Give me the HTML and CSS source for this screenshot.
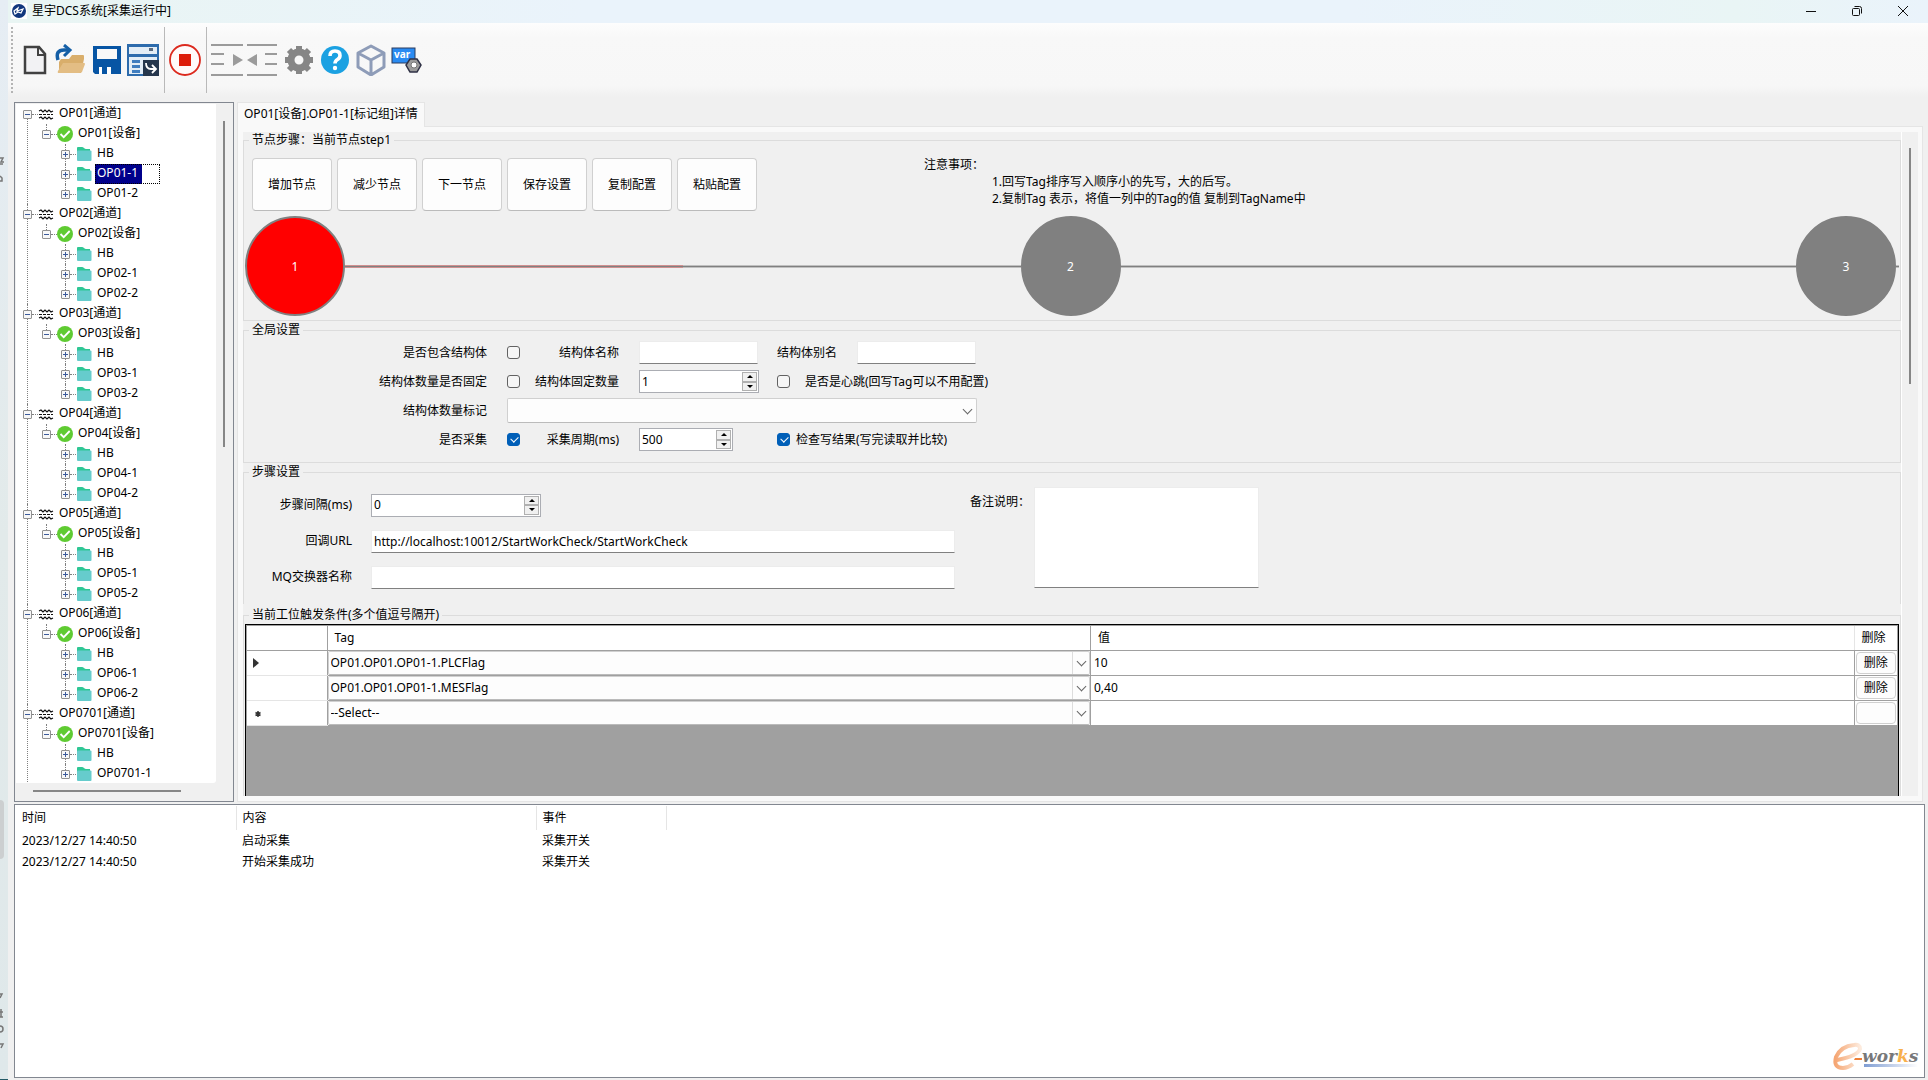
FILE: index.html
```html
<!DOCTYPE html>
<html lang="zh-CN">
  <head>
    <meta charset="UTF-8">
    <title>星宇DCS系统</title>
    <link rel="stylesheet" href="styles.css">
  </head>
  <body>
    <!-- shared icons -->
    <svg class="sprite" aria-hidden="true">
      <symbol id="icon-channel" viewBox="0 0 16 16">
        <path d="M1 5l2-1 2 2 2-2 2 2 2-2 2 2 2-1M1 12l2-1 2 2 2-2 2 2 2-2 2 2 2-1" fill="none" stroke="#111" stroke-width="1.2"/>
        <path d="M1 8.5h14" stroke="#111" stroke-dasharray="3 1"/>
      </symbol>
      <symbol id="icon-device" viewBox="0 0 16 16">
        <circle cx="8" cy="8" r="8" fill="#5fcb32"/>
        <path d="M3.5 8l3.2 3.2L12.700 5" fill="none" stroke="#fff" stroke-width="1.8"/>
      </symbol>
      <symbol id="icon-group" viewBox="0 0 16 16">
        <path d="M1 2q0-1 1-1h4q1 0 2 1t2 1h4v4H1z" fill="#2fc795"/>
        <path d="M1 5.5q0-1 1-1h12.500q1 0 1 1v8.500q0 1-1 1H2q-1 0-1-1z" fill="#66cccc"/>
      </symbol>
    </svg>

    <div class="desktop">
      <div class="backdrop">
        <svg class="scrap" viewBox="0 0 5 26"><path d="M0 2h3l-2 4h3M0 8h3M0 20l2 2v3H0" fill="none" stroke="#777" stroke-width="1.5"/></svg>
        <div class="thumb"></div>
        <svg class="scrap scrap-low" viewBox="0 0 5 60"><path d="M0 4h2l-2 4M0 22h3M1 19v8M0 27h3M0 36q3 0 3 3t-3 3M0 54h3l-2 4" fill="none" stroke="#777" stroke-width="1.5"/></svg>
      </div>

      <div class="window">
        <header class="titlebar">
          <svg class="logo" viewBox="0 0 16 16">
            <rect width="16" height="16" fill="#fff"/>
            <circle cx="8" cy="8" r="7" fill="#12377d"/>
            <path d="M3 8l4-3-1 3 6-2-2 4-3-1-3 2z" fill="none" stroke="#fff" stroke-width="1.2"/>
          </svg>
          <h1>星宇DCS系统[采集运行中]</h1>
          <div class="controls">
            <button aria-label="最小化"><svg viewBox="0 0 12 12"><path d="M1 6.5h10"/></svg></button>
            <button aria-label="还原"><svg viewBox="0 0 12 12"><rect x="1.5" y="3.5" width="7" height="7" rx="1"/><path d="M3.5 1.5h5q2 0 2 2v5"/></svg></button>
            <button aria-label="关闭"><svg viewBox="0 0 12 12"><path d="M1 1l10 10M11 1L1 11"/></svg></button>
          </div>
        </header>

        <nav class="toolbar">
          <button aria-label="新建">
            <svg viewBox="0 0 32 32"><path d="M6 3h14l6 7v19H6z" fill="#f2f2f4" stroke="#414141" stroke-width="2.5"/><path d="M19 3v8h7" fill="none" stroke="#414141" stroke-width="2"/></svg>
          </button>
          <button aria-label="打开">
            <svg viewBox="0 0 32 32"><path d="M4 18v9q0 2 2 2h20l3-14v-3q0-1-1-1H17l-3 4H6z" fill="#d9ae6b"/><path d="M8 19h21q1 0 1 1l-3 8q-1 1-3 1H4q-2 0-1-2z" fill="#e3bd84"/><path d="M3 16q-3-10 6-10h4" fill="none" stroke="#155fa6" stroke-width="3.5"/><path d="M9 1l6 5-6 6" fill="none" stroke="#155fa6" stroke-width="3"/></svg>
          </button>
          <button aria-label="保存">
            <svg viewBox="0 0 32 32"><path d="M2 2h28v28H4l-2-2z" fill="#0755a4"/><path d="M6 5h20v10H6z" fill="#f8f8f8"/><path d="M8 20h17v10H8z" fill="#fff"/><path d="M8 20h17v10h-5v-7h-4v7h-5v-7H8z" fill="#0755a4"/></svg>
          </button>
          <button aria-label="窗口">
            <svg viewBox="0 0 32 32"><path d="M0 0h32v32H0z" fill="#2d6bac"/><path d="M2 3h28v7H2zM2 13h28v17H2z" fill="#e3edf6"/><path d="M22 4h4v3h-4z" fill="#5b6b80"/><path d="M5 16h8v3H5zM5 21h8v3H5zM5 26h8v3H5z" fill="#3f7dbf"/><path d="M16 16h16v16H16z" fill="#25364c"/><path d="M19 19q0 6 5 6h4M25 21l4 4-4 4" fill="none" stroke="#fff" stroke-width="1.8"/></svg>
          </button>
          <span class="divider"></span>
          <button aria-label="停止采集">
            <svg viewBox="0 0 32 32"><circle cx="16" cy="16" r="15" fill="#fffafa" stroke="#dc2a1e" stroke-width="1.8"/><path d="M10 10h12v12H10z" fill="#dd1d0b"/></svg>
          </button>
          <span class="divider"></span>
          <button aria-label="增加缩进">
            <svg viewBox="0 0 32 32"><path d="M0 1h32M0 10h13M0 20h13M0 31h32" stroke="#9b9b9b" stroke-width="2"/><path d="M22 10v12l10-6z" fill="#9b9b9b"/></svg>
          </button>
          <button aria-label="减少缩进">
            <svg viewBox="0 0 32 32"><path d="M0 1h30M18 10h12M18 20h12M0 31h30" stroke="#9b9b9b" stroke-width="2"/><path d="M10 10v12L0 16z" fill="#9b9b9b"/></svg>
          </button>
          <button aria-label="设置">
            <svg viewBox="0 0 32 32"><circle cx="16" cy="16" r="8" fill="none" stroke="#868686" stroke-width="7"/><path d="M16 2v6M16 24v6M2 16h6M24 16h6M6 6l4 4M22 22l4 4M26 6l-4 4M10 22l-4 4" stroke="#868686" stroke-width="6"/></svg>
          </button>
          <button aria-label="帮助">
            <svg viewBox="0 0 32 32"><circle cx="16" cy="16" r="14" fill="#1ba1e2"/><path d="M11 12q0-5 5-5t5 4.500q0 2.500-2.500 4t-2.500 4" fill="none" stroke="#fff" stroke-width="3.6"/><circle cx="16" cy="24" r="2.2" fill="#fff"/></svg>
          </button>
          <button aria-label="模型">
            <svg viewBox="0 0 32 32"><path d="M16 2l13 7v14l-13 8-13-8V9zM3 9l13 7 13-7M16 16v15" fill="none" stroke="#8e9cb8" stroke-width="3" stroke-linejoin="round"/></svg>
          </button>
          <button aria-label="变量">
            <svg viewBox="0 0 32 32"><rect x="1" y="4" width="23" height="15" fill="#2a8bf2" stroke="#2b3a5c"/><text x="3" y="14" class="var-text">var</text><path d="M19 15h7l4 6-4 7h-7l-4-7z" fill="#9b9b9b" stroke="#2f3145" stroke-width="1.5"/><circle cx="23" cy="21" r="3" fill="#fff" stroke="#777"/></svg>
          </button>
        </nav>

        <main class="workspace">
          <aside class="tree-pane">
            <div class="tree-view">
              <ul class="tree" id="tree"></ul>
            </div>
            <div class="tree-vscroll"></div>
            <div class="tree-hscroll"></div>
          </aside>

          <section class="detail">
            <div class="tab">OP01[设备].OP01-1[标记组]详情</div>
            <div class="panel">
              <div class="panel-body">
                <fieldset class="group steps-group">
                  <legend>节点步骤：当前节点step1</legend>
                  <div class="actions">
                    <button class="action">增加节点</button>
                    <button class="action">减少节点</button>
                    <button class="action">下一节点</button>
                    <button class="action">保存设置</button>
                    <button class="action">复制配置</button>
                    <button class="action">粘贴配置</button>
                    <div class="notes">
                      <p>注意事项：</p>
                      <ol>
                        <li>1.回写Tag排序写入顺序小的先写，大的后写。</li>
                        <li>2.复制Tag 表示，将值一列中的Tag的值 复制到TagName中</li>
                      </ol>
                    </div>
                  </div>
                  <div class="steps">
                    <span class="step active">1</span>
                    <span class="rail half"></span>
                    <span class="step">2</span>
                    <span class="rail"></span>
                    <span class="step">3</span>
                    <span class="rail end"></span>
                  </div>
                </fieldset>

                <fieldset class="group global-group">
                  <legend>全局设置</legend>
                  <div class="global-form">
                    <label for="hasStruct">是否包含结构体</label>
                    <input type="checkbox" id="hasStruct">
                    <label for="structName">结构体名称</label>
                    <input type="text" class="short" id="structName">
                    <div class="cell">
                      <label for="structAlias">结构体别名</label>
                      <input type="text" class="short" id="structAlias">
                    </div>

                    <label for="fixedCount">结构体数量是否固定</label>
                    <input type="checkbox" id="fixedCount">
                    <label for="structCount">结构体固定数量</label>
                    <div class="spinner spinner-m">
                      <input type="text" id="structCount" value="1">
                      <span class="spin"><button aria-label="加"></button><button aria-label="减"></button></span>
                    </div>
                    <div class="cell heartbeat">
                      <input type="checkbox" id="heartbeat">
                      <label for="heartbeat">是否是心跳(回写Tag可以不用配置)</label>
                    </div>

                    <label for="countTag">结构体数量标记</label>
                    <div class="combo wide"><select id="countTag"><option></option></select></div>

                    <label for="collect">是否采集</label>
                    <input type="checkbox" id="collect" checked>
                    <label for="period">采集周期(ms)</label>
                    <div class="spinner spinner-s">
                      <input type="text" id="period" value="500">
                      <span class="spin"><button aria-label="加"></button><button aria-label="减"></button></span>
                    </div>
                    <div class="cell verify">
                      <input type="checkbox" id="verify" checked>
                      <label for="verify">检查写结果(写完读取并比较)</label>
                    </div>
                  </div>
                </fieldset>

                <fieldset class="group step-group">
                  <legend>步骤设置</legend>
                  <div class="step-settings">
                    <div class="step-form">
                      <label for="interval">步骤间隔(ms)</label>
                      <div class="spinner spinner-l">
                        <input type="text" id="interval" value="0">
                        <span class="spin"><button aria-label="加"></button><button aria-label="减"></button></span>
                      </div>
                      <label for="callback">回调URL</label>
                      <input type="text" id="callback" value="http://localhost:10012/StartWorkCheck/StartWorkCheck">
                      <label for="exchange">MQ交换器名称</label>
                      <input type="text" id="exchange">
                    </div>
                    <label class="remark-label" for="remark">备注说明：</label>
                    <textarea id="remark"></textarea>
                  </div>
                </fieldset>

                <fieldset class="group trigger-group">
                  <legend>当前工位触发条件(多个值逗号隔开)</legend>
                  <div class="grid-view">
                    <table class="triggers">
                      <thead>
                        <tr><th class="mark"></th><th>Tag</th><th>值</th><th class="remove">删除</th></tr>
                      </thead>
                      <tbody>
                        <tr>
                          <td class="mark"><svg viewBox="0 0 8 10"><path d="M0 0l6 5-6 5z"/></svg></td>
                          <td class="pick"><div class="combo"><select aria-label="Tag"><option>OP01.OP01.OP01-1.PLCFlag</option></select></div></td>
                          <td>10</td>
                          <td class="remove"><button>删除</button></td>
                        </tr>
                        <tr>
                          <td class="mark"></td>
                          <td class="pick"><div class="combo"><select aria-label="Tag"><option>OP01.OP01.OP01-1.MESFlag</option></select></div></td>
                          <td>0,40</td>
                          <td class="remove"><button>删除</button></td>
                        </tr>
                        <tr>
                          <td class="mark"><svg viewBox="0 0 8 10"><path d="M5 3v6M2.500 4.500l5 3M7.500 4.500l-5 3" stroke="#333" stroke-width="1.5"/></svg></td>
                          <td class="pick"><div class="combo"><select aria-label="Tag"><option>--Select--</option></select></div></td>
                          <td></td>
                          <td class="remove"><button aria-label="删除"></button></td>
                        </tr>
                      </tbody>
                    </table>
                  </div>
                </fieldset>
              </div>
              <div class="panel-scroll"></div>
            </div>
          </section>
        </main>

        <section class="log">
          <table>
            <thead>
              <tr><th class="time">时间</th><th class="content">内容</th><th class="event">事件</th><th class="rest"></th></tr>
            </thead>
            <tbody>
              <tr><td>2023/12/27 14:40:50</td><td>启动采集</td><td>采集开关</td><td></td></tr>
              <tr><td>2023/12/27 14:40:50</td><td>开始采集成功</td><td>采集开关</td><td></td></tr>
            </tbody>
          </table>
          <svg class="eworks" viewBox="0 0 88 30">
            <defs>
              <linearGradient id="warm" x1="0" x2="1"><stop offset="0" stop-color="#f5a673"/><stop offset="1" stop-color="#fdebdd"/></linearGradient>
              <linearGradient id="cool" x1="0" x2="1"><stop offset="0" stop-color="#7f9dd3"/><stop offset="1" stop-color="#fff"/></linearGradient>
            </defs>
            <path d="M5 18Q26 14 28 7Q28 2 22 3Q9 4 4 15Q1 26 11 26Q16 26 21 22" fill="none" stroke="url(#warm)" stroke-width="4"/>
            <path d="M23 16h7v2h-8z" fill="#ee7f37"/>
            <path d="M32 22h54v3H32z" fill="url(#cool)"/>
            <text x="30" y="20" class="works">wor<tspan class="works-k">k</tspan>s</text>
          </svg>
        </section>
      </div>
    </div>
    <script src="script.js"></script>
  </body>
</html>
```
FILE: styles.css
```css
* {
  box-sizing: border-box;
}

body {
  margin: 0;
  font-family: "Noto Sans", "Noto Sans CJK SC", sans-serif;
  font-size: 12px;
  line-height: 16px;
  color: #000;
  background: #f0f0f0;
}

button, input, select, textarea {
  font: inherit;
  color: inherit;
  margin: 0;
}

.sprite {
  display: none;
}

.desktop {
  display: flex;
  height: 100vh;
  overflow: hidden;
}

/* strip of the desktop left of the window */
.backdrop {
  position: relative;
  width: 8px;
  background: linear-gradient(#e6edf4, #e2eaea 50%, #dfe8ea);
  border-bottom: 1px solid #245a66;
  overflow: hidden;
}

.thumb {
  position: absolute;
  top: 800px;
  left: 0;
  width: 4px;
  height: 59px;
  background: #cccfd0;
  border-radius: 0 4px 4px 0;
}

.scrap {
  position: absolute;
  top: 156px;
  left: 0;
  width: 5px;
  height: 26px;
}

.scrap-low {
  top: 990px;
  height: 60px;
}

.window {
  flex: 1;
  min-width: 0;
  display: flex;
  flex-direction: column;
  background: #f0f0f0;
}

.titlebar {
  display: flex;
  align-items: center;
  height: 23px;
  padding: 0 2px 2px 3px;
  background: linear-gradient(90deg, #e9f5f3, #eaf3fb 30%, #eaf3fb 70%, #e9f5f5 90%, #eaf3fb);
}

.logo {
  width: 16px;
  height: 16px;
}

h1 {
  margin: 0 auto 0 5px;
  font-size: 12px;
  font-weight: normal;
}

.controls {
  display: flex;
}

.controls button {
  display: flex;
  align-items: center;
  justify-content: center;
  width: 46px;
  height: 20px;
  padding: 0;
  border: 0;
  background: none;
}

.controls svg {
  width: 12px;
  height: 12px;
  fill: none;
  stroke: #111;
}

.toolbar {
  display: flex;
  align-items: center;
  height: 74px;
  padding-left: 9px;
  background: linear-gradient(#fdfdfd, #f8f8f8 20%, #f7f7f7 85%, #f0f0f0);
  position: relative;
}

.toolbar::before {
  content: "";
  position: absolute;
  left: 3px;
  top: 4px;
  height: 66px;
  border-left: 2px dotted #b4b4b4;
}

.toolbar button {
  width: 36px;
  height: 36px;
  padding: 2px;
  border: 0;
  background: none;
}

.toolbar svg {
  display: block;
  width: 32px;
  height: 32px;
}

.divider {
  width: 1px;
  height: 66px;
  margin: 0 2px 0 3px;
  background: #b9b9b9;
}

.var-text {
  font: bold 10px "Noto Sans", sans-serif;
  fill: #fff;
}

.workspace {
  flex: 1;
  min-height: 0;
  display: flex;
  gap: 3px;
  padding: 5px 5px 2px 6px;
}

/* device tree */
.tree-pane {
  display: grid;
  grid-template-columns: 1fr 16px;
  grid-template-rows: minmax(0, 1fr) 17px;
  width: 220px;
  padding: 1px;
  border: 1px solid #828790;
}

.tree-view {
  overflow: hidden;
  background: #fff;
  border-radius: 0 0 3px 0;
}

.tree-vscroll {
  grid-row: 1 / 3;
  grid-column: 2;
  display: flex;
  justify-content: center;
  padding-top: 17px;
}

.tree-vscroll::before {
  content: "";
  width: 2px;
  height: 48%;
  background: #868686;
}

.tree-hscroll {
  grid-row: 2;
  grid-column: 1;
  padding: 7px 0 0 17px;
}

.tree-hscroll::before {
  content: "";
  display: block;
  width: 148px;
  height: 2px;
  background: #868686;
}

.tree, .tree ul {
  list-style: none;
  margin: 0;
  padding: 0;
}

.tree ul {
  padding-left: 19px;
}

.tree li {
  position: relative;
}

.tree li::before {
  content: "";
  position: absolute;
  top: 0;
  bottom: 0;
  left: 11px;
  border-left: 1px dotted #808080;
}

.tree ul li:last-child::before {
  bottom: auto;
  height: 10px;
}

.tree > li:first-child::before {
  top: 10px;
}

.row {
  display: flex;
  align-items: center;
  height: 20px;
  padding-left: 7px;
}

.expander {
  position: relative;
  width: 9px;
  height: 9px;
  padding: 0;
  border: 1px solid #919191;
  border-radius: 1px;
  background: linear-gradient(#3b5a9b, #3b5a9b) center / 5px 1px no-repeat #f7f7f7;
}

.expander.closed {
  background: linear-gradient(#3b5a9b, #3b5a9b) center / 5px 1px no-repeat,
    linear-gradient(#3b5a9b, #3b5a9b) center / 1px 5px no-repeat #f7f7f7;
}

.link {
  width: 6px;
  border-top: 1px dotted #808080;
}

.row svg {
  width: 16px;
  height: 16px;
  margin-right: 3px;
}

.name {
  height: 20px;
  line-height: 18px;
  white-space: nowrap;
}

.name span {
  display: block;
  height: 20px;
  padding: 0 2px;
}

.name.selected {
  width: 65px;
  outline: 1px dotted #000;
  outline-offset: -1px;
}

.name.selected span {
  width: 47px;
  background: #00008b;
  color: #fff;
}

/* detail pane */
.detail {
  flex: 1;
  min-width: 0;
  display: flex;
  flex-direction: column;
}

.tab {
  align-self: flex-start;
  position: relative;
  height: 25px;
  margin-bottom: -1px;
  padding: 3px 6px;
  background: #f9f9f9;
  border: 1px solid #e5e5e5;
  border-bottom: 0;
}

.panel {
  flex: 1;
  min-height: 0;
  display: flex;
  padding: 5px 4px 5px 5px;
  background: #f9f9f9;
  border: 1px solid #e5e5e5;
}

.panel-body {
  flex: 1;
  min-width: 0;
  overflow: hidden;
  background: #f0f0f0;
  border-right: 1px solid #fff;
}

.panel-scroll {
  width: 16px;
  display: flex;
  justify-content: center;
  padding-top: 16px;
  background: #f0f0f0;
}

.panel-scroll::before {
  content: "";
  width: 2px;
  height: 236px;
  background: #868686;
}

.group {
  min-width: 0;
  margin: 0 0 1px;
  padding: 0;
  border: 1px solid #dcdcdc;
}

.group legend {
  margin-left: 5px;
  padding: 0 3px;
}

.steps-group {
  height: 189px;
}

.global-group {
  height: 141px;
}

.step-group {
  height: 140px;
  border-bottom: 0;
  margin-bottom: 3px;
}

.actions {
  display: flex;
  gap: 5px;
  padding: 10px 8px 5px;
}

.action {
  width: 80px;
  height: 53px;
  padding: 0;
  background: #fdfdfd;
  border: 1px solid #d0d0d0;
  border-bottom-color: #bbb;
  border-radius: 4px;
}

.notes {
  margin: -2px 0 0 162px;
  line-height: 17px;
  white-space: nowrap;
}

.notes p {
  margin: 0;
}

.notes ol {
  list-style: none;
  margin: 0;
  padding-left: 68px;
}

.steps {
  display: flex;
  align-items: center;
  padding: 0 1px 0 1px;
}

.step {
  width: 100px;
  height: 100px;
  line-height: 98px;
  text-align: center;
  color: #fff;
  background: #808080;
  border: 2px solid #808080;
  border-radius: 50%;
}

.step.active {
  background: #f00;
}

.rail {
  flex: 1;
  height: 3px;
  background: #808080;
  border: solid #c0c0c0;
  border-width: 1px 0;
}

.rail.half {
  border-image: linear-gradient(90deg, #d09090 50%, #c0c0c0 50%) 1;
}

.rail.end {
  flex: 0 0 3px;
}

/* form controls */
input[type="text"], textarea {
  height: 23px;
  padding: 0 2px;
  background: #fff;
  border: 1px solid #ececec;
  border-bottom-color: #808080;
  border-radius: 0;
  outline: 0;
}

input[type="checkbox"] {
  appearance: none;
  position: relative;
  width: 13px;
  height: 13px;
  background: #f6f6f6;
  border: 1px solid #626262;
  border-radius: 3px;
}

input[type="checkbox"]:checked {
  background: #005fb8;
  border-color: #005fb8;
}

input[type="checkbox"]:checked::after {
  content: "";
  position: absolute;
  left: 3px;
  top: 2px;
  width: 6px;
  height: 4px;
  border: solid #fff;
  border-width: 0 0 1px 1px;
  transform: rotate(-45deg);
}

.spinner {
  display: flex;
  height: 23px;
  padding: 1px;
  background: #fff;
  border: 1px solid #abadb3;
}

.spinner input[type="text"] {
  flex: 1;
  min-width: 0;
  height: 18px;
  padding: 0 1px;
  border: 0;
}

.spinner-s {
  width: 94px;
}

.spinner-m {
  width: 120px;
}

.spinner-l {
  width: 170px;
}

.spin {
  display: flex;
  flex-direction: column;
  width: 15px;
}

.spin button {
  flex: 1;
  display: flex;
  align-items: center;
  justify-content: center;
  padding: 0;
  background: #f0f0f0;
  border: 1px solid #b0b0b0;
}

.spin button::before {
  content: "";
  border: 3px solid transparent;
  border-top: 0;
  border-bottom-color: #000;
}

.spin button:last-child::before {
  transform: rotate(180deg);
}

.combo {
  position: relative;
  height: 25px;
}

.combo select {
  appearance: none;
  display: block;
  width: 100%;
  height: 100%;
  padding: 0 20px 0 2px;
  background: #fdfdfd;
  border: 1px solid #d0d0d0;
  border-bottom-color: #bbb;
  border-radius: 2px;
}

.combo::after {
  content: "";
  position: absolute;
  top: 50%;
  right: 6px;
  width: 6px;
  height: 6px;
  margin-top: -5px;
  border: solid #666;
  border-width: 0 1px 1px 0;
  transform: rotate(45deg);
  pointer-events: none;
}

.global-form {
  display: grid;
  grid-template-columns: 263px 13px 119px 138px 1fr;
  grid-auto-rows: 29px;
  align-items: center;
}

.global-form > label {
  padding-right: 20px;
  text-align: right;
}

.short {
  width: 119px;
}

.cell {
  display: flex;
  align-items: center;
  gap: 20px;
}

.heartbeat {
  gap: 15px;
}

.verify {
  gap: 6px;
}

.combo.wide {
  grid-column: 2 / 6;
  width: 470px;
}

.step-settings {
  display: flex;
  padding-top: 7px;
}

.step-form {
  display: grid;
  grid-template-columns: 127px 584px;
  grid-auto-rows: 36px;
  align-items: center;
}

.step-form label {
  padding-right: 19px;
  text-align: right;
}

.remark-label {
  width: 79px;
  padding: 7px 0 0 15px;
  white-space: nowrap;
}

textarea {
  width: 225px;
  height: 101px;
  resize: none;
}

/* trigger conditions */
.grid-view {
  height: 240px;
  margin: 1px 1px 0;
  background: #a0a0a0;
  border: 1px solid #000;
  padding: 1px 1px 0;
}

.triggers {
  width: 100%;
  table-layout: fixed;
  border-collapse: collapse;
  background: #fff;
}

.triggers th, .triggers td {
  height: 25px;
  padding: 0 3px;
  text-align: left;
  font-weight: normal;
  border: solid #a0a0a0;
  border-width: 0 0 1px 1px;
}

.triggers th {
  height: 24px;
  padding-left: 7px;
}

.triggers .mark {
  width: 80px;
  padding-left: 6px;
  border-left: 0;
  border-bottom-color: #e5e5e5;
}

.triggers th.mark {
  border-bottom-color: #a0a0a0;
}

.triggers .mark svg {
  display: block;
  width: 8px;
  height: 10px;
  fill: #333;
}

.triggers td.pick {
  padding: 0;
}

.triggers .combo {
  height: 24px;
}

.triggers .combo select {
  background: linear-gradient(#ddd, #ddd) right 16px top / 1px 100% no-repeat #fdfdfd;
}

.triggers .combo::after {
  right: 5px;
}

.triggers .remove {
  width: 43px;
  padding: 0 1px;
}

.triggers th.remove {
  padding-left: 7px;
  border-left-color: #e5e5e5;
}

.triggers button {
  display: block;
  width: 100%;
  height: 22px;
  padding: 0;
  background: #fdfdfd;
  border: 1px solid #d0d0d0;
  border-radius: 4px;
}

/* running log */
.log {
  position: relative;
  height: 274px;
  margin: 0 3px 2px 6px;
  padding: 1px;
  background: #fff;
  border: 1px solid #828790;
}

.log table {
  width: 100%;
  table-layout: fixed;
  border-collapse: collapse;
}

.log th, .log td {
  height: 21px;
  padding: 0 6px;
  text-align: left;
  font-weight: normal;
}

.log th {
  height: 24px;
  border-right: 1px solid #e5e5e5;
}

.log .time {
  width: 220px;
}

.log .content {
  width: 300px;
}

.log .event {
  width: 130px;
}

.log .rest {
  border: 0;
}

.eworks {
  position: absolute;
  right: 4px;
  bottom: 5px;
  width: 88px;
  height: 30px;
}

.works {
  font: italic bold 17px "DejaVu Serif", serif;
  fill: #77787a;
}

.works-k {
  fill: #f8b04c;
}
```
FILE: script.js
```js
const tree = document.querySelector("#tree");
const selected = "OP01-1";

const stations = [
  { id: "OP01", groups: ["HB", "OP01-1", "OP01-2"] },
  { id: "OP02", groups: ["HB", "OP02-1", "OP02-2"] },
  { id: "OP03", groups: ["HB", "OP03-1", "OP03-2"] },
  { id: "OP04", groups: ["HB", "OP04-1", "OP04-2"] },
  { id: "OP05", groups: ["HB", "OP05-1", "OP05-2"] },
  { id: "OP06", groups: ["HB", "OP06-1", "OP06-2"] },
  { id: "OP0701", groups: ["HB", "OP0701-1"] }
];

function row(name, icon, closed) {
  return `<div class="row">
    <button class="expander ${closed ? "closed" : ""}" aria-label="展开"></button>
    <span class="link"></span>
    <svg><use href="#icon-${icon}"></use></svg>
    <div class="name ${name === selected ? "selected" : ""}"><span>${name}</span></div>
  </div>`;
}

tree.innerHTML = stations.map(function(station) {
  const groups = station.groups.map(function(name) {
    return `<li>${row(name, "group", true)}</li>`;
  }).join("");
  return `<li>${row(station.id + "[通道]", "channel")}
    <ul><li>${row(station.id + "[设备]", "device")}<ul>${groups}</ul></li></ul>
  </li>`;
}).join("");
```
